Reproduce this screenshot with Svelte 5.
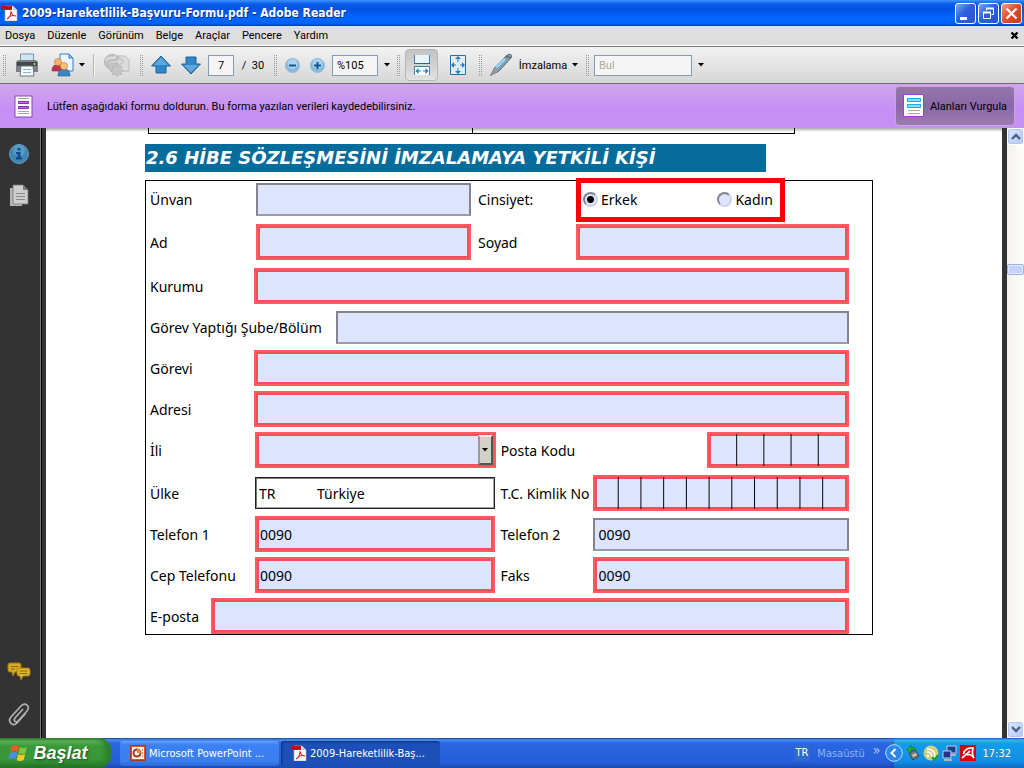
<script lang="ts">
  const menus = ["Dosya", "Düzenle", "Görünüm", "Belge", "Araçlar", "Pencere", "Yardım"];

  let pageNumber = $state("7");
  let zoomLevel = $state("%105");
  let findText = $state("");
  let gender = $state("erkek");

  let form = $state({
    unvan: "",
    ad: "",
    soyad: "",
    kurum: "",
    sube: "",
    gorev: "",
    adres: "",
    il: "",
    postaKodu: "",
    ulkeKodu: "TR",
    ulke: "Türkiye",
    kimlikNo: "",
    telefon1: "0090",
    telefon2: "0090",
    cep: "0090",
    faks: "0090",
    eposta: "",
  });
</script>

<svelte:head>
  <title>2009-Hareketlilik-Başvuru-Formu.pdf - Adobe Reader</title>
</svelte:head>

{#snippet pdfIcon()}
  <svg width="16" height="16" viewBox="0 0 16 16" aria-hidden="true">
    <path d="M3 1h8l4 4v11H3z" fill="#fff" stroke="#aab" stroke-width=".7" />
    <path d="M11 1v4h4z" fill="#ccd" />
    <path d="M0 1h10v4H0z" fill="#c80d12" />
    <path d="M5 14c2-1 4-4 4-8 .5 4 2 5 5 5-3-1-6 0-8 2" fill="none" stroke="#d8251c" stroke-width="1.1" />
  </svg>
{/snippet}

{#snippet caret()}
  <svg class="caret" width="6" height="4" viewBox="0 0 6 4" aria-hidden="true"><path d="M0 0h6L3 3.5z" fill="#000" /></svg>
{/snippet}

{#snippet arrow()}
  <svg width="22" height="22" viewBox="0 0 22 22" aria-hidden="true">
    <path d="M11 2 20.500 12H16v7H6v-7H1.500z" fill="#2e87c8" stroke="#1f6298" />
    <path d="M11 3.500 18 11H4z" fill="#5eaade" />
  </svg>
{/snippet}

<div class="window">
  <header class="titlebar">
    {@render pdfIcon()}
    <h1>2009-Hareketlilik-Başvuru-Formu.pdf - Adobe Reader</h1>
    <div class="window-buttons">
      <button aria-label="Simge durumuna küçült">
        <svg width="19" height="19" viewBox="0 0 19 19"><path d="M4 13h7v3H4z" fill="#fff" /></svg>
      </button>
      <button aria-label="Önceki boyut">
        <svg width="19" height="19" viewBox="0 0 19 19" fill="none" stroke="#fff">
          <path d="M7.500 6.500v-2h7v6h-2" /><path d="M7 4.500h8" stroke-width="2" />
          <path d="M4.500 8.500h7v6h-7z" /><path d="M4 8.500h8" stroke-width="2" />
        </svg>
      </button>
      <button class="close" aria-label="Kapat">
        <svg width="19" height="19" viewBox="0 0 19 19"><path d="m4.500 4.500 10 10m0-10-10 10" stroke="#fff" stroke-width="2.300" /></svg>
      </button>
    </div>
  </header>

  <nav class="menubar">
    {#each menus as menu}
      <button>{menu}</button>
    {/each}
    <button class="close-doc" aria-label="Belgeyi kapat">
      <svg width="9" height="9" viewBox="0 0 9 9"><path d="m1.500 1.500 6 6m0-6-6 6" stroke="#000" stroke-width="2.400" /></svg>
    </button>
  </nav>

  <div class="toolbar">
    <div class="group">
      <span class="grip"></span>
      <button class="w32" aria-label="Yazdır">
        <svg width="24" height="24" viewBox="0 0 24 24">
          <path d="M5.500 1h13v9h-13z" fill="#cfe6f4" stroke="#7894a8" />
          <path d="M3 7h18l2 2v10H1V9z" fill="#7b8184" />
          <path d="M2 9h20v4H2z" fill="#42474a" />
          <circle cx="19.500" cy="11" r="1" fill="#c6e48b" />
          <path d="M6 13h12l1 10H5z" fill="#f5f9fc" stroke="#70777b" />
          <path d="M8 16.500h8M8 19.500h8" stroke="#8fb3cd" />
        </svg>
      </button>
      <button class="w42 with-caret" aria-label="Ortak çalış">
        <svg width="24" height="24" viewBox="0 0 24 24">
          <path d="M9 1h9l4 4v13H9z" fill="#eaf6ff" stroke="#3581c4" />
          <path d="M18 1v4h4z" fill="#9bcbef" stroke="#3581c4" />
          <path d="M1 18c0-6 3-6 6-6s5 1 6 6z" fill="#c03452" stroke="#8c1f3a" stroke-width=".6" />
          <circle cx="7" cy="9" r="3.600" fill="#f5b469" stroke="#c07a30" stroke-width=".6" />
          <path d="M7 23c0-6 3-7 6-7s6 1 6 7z" fill="#3a87c4" stroke="#20598c" stroke-width=".6" />
          <circle cx="13" cy="13" r="3.600" fill="#f9c07b" stroke="#c07a30" stroke-width=".6" />
        </svg>
        {@render caret()}
      </button>
      <span class="separator"></span>
      <button class="w35" disabled aria-label="Web">
        <svg width="28" height="24" viewBox="0 0 28 24">
          <path d="M14 3h8l4 4v11H14z" fill="#dcdcdc" stroke="#bbb" />
          <circle cx="9" cy="9" r="7.500" fill="#c4c4c4" stroke="#b2b2b2" />
          <path d="M3 7c4-4 6-1 10-3" stroke="#dedede" stroke-width="2" fill="none" />
          <path d="M4 13c1-5 7-6 11-6V4l6 4.500-6 4.500v-3c-4 0-8 0-11 3z" fill="#d9d9d9" stroke="#b6b6b6" />
          <path d="m14 11 2 3 3-1-1 3 3 2-3 1 1 3-3-1-2 3-2-3-3 1 1-3-3-1 3-2-1-3 3 1z" fill="#c6c6c6" stroke="#b6b6b6" stroke-width=".8" />
        </svg>
      </button>
    </div>

    <div class="group">
      <span class="grip"></span>
      <button class="w26" aria-label="Önceki sayfa">{@render arrow()}</button>
      <button class="w26 down" aria-label="Sonraki sayfa">{@render arrow()}</button>
      <input class="page-number" aria-label="Sayfa" bind:value={pageNumber} />
      <span class="page-count">/&nbsp; 30</span>
    </div>

    <div class="group">
      <span class="grip"></span>
      {#each ["Uzaklaştır", "Yakınlaştır"] as label, i}
        <button class="w21" aria-label={label}>
          <svg width="17" height="17" viewBox="0 0 17 17">
            <circle cx="8.500" cy="8.500" r="7" fill="#85bbe3" stroke="#9ab7cf" />
            <circle cx="8.500" cy="7" r="5" fill="#a9d3f0" />
            <path d={i ? "M5 8.500h7M8.500 5v7" : "M5 8.500h7"} stroke="#14558d" stroke-width="2" />
          </svg>
        </button>
      {/each}
      <input class="zoom" aria-label="Yakınlaştırma" bind:value={zoomLevel} />
      <button class="w9" aria-label="Yakınlaştırma listesi">{@render caret()}</button>
    </div>

    <div class="group">
      <span class="grip"></span>
      <button class="w33 pressed" aria-label="Genişliğe sığdır" aria-pressed="true">
        <svg width="18" height="22" viewBox="0 0 18 22">
          <path d="M1.500 1v8.500h15V1" fill="#e8f4fc" stroke="#417fab" />
          <path d="M1 9.500h16" stroke="#2b648d" />
          <path d="M1.500 21v-8.500h15V21" fill="#fff" stroke="#417fab" />
          <path d="M4 17h10" stroke="#2b79b8" stroke-dasharray="4 2" />
          <path d="m2.500 17 3-3v6zM15.500 17l-3-3v6z" fill="#2b79b8" />
        </svg>
      </button>
      <button class="w31" aria-label="Sayfaya sığdır">
        <svg width="18" height="22" viewBox="0 0 18 22">
          <path d="M1.500 1.500h15v19h-15z" fill="#dceefb" stroke="#2b70a5" />
          <path d="M9 3v5M9 14v5M3 11h4M11 11h4" stroke="#2b79b8" />
          <path d="m9 2-3 3h6zM9 20l-3-3h6zM2 11l3-3v6zM16 11l-3-3v6z" fill="#2b79b8" />
        </svg>
      </button>
    </div>

    <div class="group">
      <span class="grip"></span>
      <button class="sign">
        <svg width="25" height="24" viewBox="0 0 25 24" aria-hidden="true">
          <path d="M1.500 22.500 6 14 17 3c3-3 7-2 5 2L10 18z" fill="#7f9cb0" stroke="#646b70" />
          <path d="M7 14.500 16 6" stroke="#9fd0f2" stroke-width="3" />
          <path d="m1.500 22.500 4.500-8 4 3z" fill="#999c9e" />
          <path d="m17 3 5 2" stroke="#555" />
        </svg>
        <span>İmzalama</span>
        {@render caret()}
      </button>
    </div>

    <div class="group">
      <span class="grip"></span>
      <input class="find" aria-label="Bul" placeholder="Bul" bind:value={findText} />
      <button class="w9" aria-label="Bul seçenekleri">{@render caret()}</button>
    </div>
  </div>

  <div class="message-bar">
    <svg width="19" height="23" viewBox="0 0 19 23" aria-hidden="true">
      <path d="M1 1h17v21H1z" fill="#fff" stroke="#8a45b0" />
      <path d="M4 3.500h11M4 16.500h11M4 18.500h11" stroke="#aaa" />
      <path d="M4.500 6.500h10v2h-10zM4.500 11.500h10v2h-10z" fill="#c56ee8" stroke="#8b28b2" />
    </svg>
    <p>Lütfen aşağıdaki formu doldurun. Bu forma yazılan verileri kaydedebilirsiniz.</p>
    <button class="highlight" aria-pressed="true">
      <svg width="22" height="24" viewBox="0 0 22 24" aria-hidden="true">
        <path d="M.5.500h20v22H.5z" fill="#fff" stroke="#a03cc8" />
        <path d="M4.500 4.500h13v3h-13zM4.500 10.500h13v3h-13z" fill="#7fe4ff" stroke="#18a8e8" />
        <path d="M5 16.500h12M5 19.500h12" stroke="#aaa" />
      </svg>
      Alanları Vurgula
    </button>
  </div>

  <main>
    <aside class="sidebar">
      <button aria-label="Bilgi">
        <svg width="22" height="22" viewBox="0 0 22 22">
          <circle cx="11" cy="11" r="9.500" fill="#3f86b2" stroke="#5f9cc0" />
          <circle cx="11" cy="7.500" r="6" fill="#73aecf" opacity=".5" />
          <path d="M9.500 5h3v2.500h-3zM8 9h4.500v5.500H14v2H8v-2h1.500V11H8z" fill="#0c4b93" />
        </svg>
      </button>
      <button aria-label="Sayfalar">
        <svg width="20" height="24" viewBox="0 0 20 24">
          <path d="M1 4h12v18H1z" fill="#b5b5b5" />
          <path d="M4 1h10l5 5v14H4z" fill="#cdcdcd" stroke="#777" stroke-width=".8" />
          <path d="M14 1v5h5z" fill="#777" />
          <path d="M7 9.500h9M7 12.500h9M7 15.500h9" stroke="#8a8a8a" />
        </svg>
      </button>
      <button class="comments" aria-label="Yorumlar">
        <svg width="24" height="20" viewBox="0 0 24 20">
          <path d="M3 1h9q2 0 2 2v5q0 2-2 2H8l-2 4-1-4H3q-2 0-2-2V3q0-2 2-2z" fill="#d6ac20" stroke="#a87510" />
          <path d="M12 6h9q2 0 2 2v4q0 2-2 2h-5l-2 4-1-4h-1q-2 0-2-2V8q0-2 2-2z" fill="#dfb92a" stroke="#a87510" />
          <path d="M4 4.500h7M4 7h4M12.500 9h8M12.500 11.500h8" stroke="#886514" />
        </svg>
      </button>
      <button aria-label="Ekler">
        <svg width="22" height="24" viewBox="0 0 22 24" fill="none" stroke="#b1b1b1" stroke-width="1.700">
          <path d="m15 7-8 9c-2 3 1 5 3 3l9-10c4-5-2-9-6-5L3 15c-4 5 2 10 6 6l9-10" />
        </svg>
      </button>
    </aside>

    <div class="document">
      <div class="previous-table"><span></span><span></span></div>
      <h2>2.6 HİBE SÖZLEŞMESİNİ İMZALAMAYA YETKİLİ KİŞİ</h2>

      <form class="sheet">
        <div class="row person title">
          <label for="unvan">Ünvan</label>
          <input id="unvan" class="field" bind:value={form.unvan} />
          <span class="second">Cinsiyet:</span>
          <div class="gender" role="radiogroup" aria-label="Cinsiyet">
            <label><input type="radio" name="cinsiyet" value="erkek" bind:group={gender} />Erkek</label>
            <label><input type="radio" name="cinsiyet" value="kadin" bind:group={gender} />Kadın</label>
          </div>
        </div>
        <div class="row person">
          <label for="ad">Ad</label>
          <input id="ad" class="field required" bind:value={form.ad} />
          <label class="second" for="soyad">Soyad</label>
          <input id="soyad" class="field required" bind:value={form.soyad} />
        </div>
        <div class="row full kurum">
          <label for="kurum">Kurumu</label>
          <input id="kurum" class="field required" bind:value={form.kurum} />
        </div>
        <div class="row sube">
          <label for="sube">Görev Yaptığı Şube/Bölüm</label>
          <input id="sube" class="field" bind:value={form.sube} />
        </div>
        <div class="row full">
          <label for="gorev">Görevi</label>
          <input id="gorev" class="field required" bind:value={form.gorev} />
        </div>
        <div class="row full">
          <label for="adres">Adresi</label>
          <input id="adres" class="field required" bind:value={form.adres} />
        </div>
        <div class="row city">
          <label for="il">İli</label>
          <div class="select-wrap">
            <select id="il" class="field required" bind:value={form.il}>
              <option value=""></option>
            </select>
            <span class="drop">{@render caret()}</span>
          </div>
          <label class="third" for="posta-kodu">Posta Kodu</label>
          <div class="comb" style="--cells: 5">
            <input id="posta-kodu" class="field required" maxlength="5" bind:value={form.postaKodu} />
          </div>
        </div>
        <div class="row pair country">
          <label for="ulke">Ülke</label>
          <div class="readonly">
            <input class="code" aria-label="Ülke kodu" readonly value={form.ulkeKodu} />
            <input id="ulke" readonly value={form.ulke} />
          </div>
          <label class="third" for="kimlik">T.C. Kimlik No</label>
          <div class="comb" style="--cells: 11">
            <input id="kimlik" class="field required" maxlength="11" bind:value={form.kimlikNo} />
          </div>
        </div>
        <div class="row pair">
          <label for="telefon1">Telefon 1</label>
          <input id="telefon1" class="field required" bind:value={form.telefon1} />
          <label class="third" for="telefon2">Telefon 2</label>
          <input id="telefon2" class="field" bind:value={form.telefon2} />
        </div>
        <div class="row pair">
          <label for="cep">Cep Telefonu</label>
          <input id="cep" class="field required" bind:value={form.cep} />
          <label class="third" for="faks">Faks</label>
          <input id="faks" class="field required" bind:value={form.faks} />
        </div>
        <div class="row eposta">
          <label for="eposta">E-posta</label>
          <input id="eposta" class="field required" bind:value={form.eposta} />
        </div>
      </form>
    </div>

    <div class="scrollbar">
      <button aria-label="Yukarı kaydır">
        <svg width="10" height="7" viewBox="0 0 10 7"><path d="m1 6 4-4 4 4" fill="none" stroke="#4d6185" stroke-width="2.400" /></svg>
      </button>
      <div class="track"><span class="thumb"></span></div>
      <button aria-label="Aşağı kaydır">
        <svg width="10" height="7" viewBox="0 0 10 7"><path d="m1 1 4 4 4-4" fill="none" stroke="#4d6185" stroke-width="2.400" /></svg>
      </button>
    </div>
  </main>

  <footer class="taskbar">
    <button class="start">
      <svg width="20" height="20" viewBox="0 0 20 20" aria-hidden="true">
        <path d="M3 3q4-2 7 0L8.500 9q-3-2-7 0z" fill="#ee5a25" />
        <path d="M11 4q3 2 7 0l-1.500 6q-4 2-7 0z" fill="#86c440" />
        <path d="M1.200 10q4-2 7 0l-1.500 6q-3-2-7 0z" fill="#4c8bf0" />
        <path d="M9.200 11q3 2 7 0l-1.500 6q-4 2-7 0z" fill="#fbc52c" />
      </svg>
      Başlat
    </button>
    <button class="task">
      <svg width="16" height="16" viewBox="0 0 16 16" aria-hidden="true">
        <path d="M.5.500h15v15H.5z" fill="#d9532a" stroke="#a9391a" />
        <path d="M2 2h12v12H2z" fill="#fff4e8" />
        <circle cx="7" cy="8" r="3.500" fill="none" stroke="#a6371a" stroke-width="2" />
        <path d="M7 8V4a4 4 0 0 1 4 4z" fill="#e8854d" />
        <path d="M12 5h1M12 8h1M12 11h1" stroke="#a6371a" />
      </svg>
      <span>Microsoft PowerPoint ...</span>
    </button>
    <button class="task active">
      {@render pdfIcon()}
      <span>2009-Hareketlilik-Baş...</span>
    </button>
    <div class="toolbars">
      <span class="language">TR</span>
      <span class="desktop">Masaüstü</span>
      <span class="chevrons">»</span>
    </div>
    <div class="tray">
      <button class="expand" aria-label="Gizli simgeleri göster">
        <svg width="18" height="18" viewBox="0 0 18 18">
          <circle cx="9" cy="9" r="8.300" fill="#2b87e8" stroke="#b9dcff" />
          <path d="M10.500 5 6.500 9l4 4" fill="none" stroke="#fff" stroke-width="2" />
        </svg>
      </button>
      <svg width="14" height="16" viewBox="0 0 14 16" aria-hidden="true">
        <path d="m3 8 6-3 4 6-6 4z" fill="#777c80" stroke="#333" stroke-width=".8" />
        <path d="m6 10 4-2 1 2-4 2z" fill="#ccc" />
        <path d="M1 5 5 0v2q5 0 5 4-2-2-5-2v4z" fill="#28b52d" stroke="#116d18" stroke-width=".6" />
      </svg>
      <svg width="16" height="16" viewBox="0 0 16 16" aria-hidden="true">
        <circle cx="8" cy="8" r="7.500" fill="#ccd07a" />
        <path d="M4 4q8 0 8 8M4 7q5 0 5 5" stroke="#fff" stroke-width="1.500" fill="none" />
        <circle cx="5" cy="11" r="1.300" fill="#fff" />
        <path d="m9 12 2 3 4-5" fill="none" stroke="#119b2c" stroke-width="2" />
      </svg>
      <svg width="15" height="16" viewBox="0 0 15 16" aria-hidden="true">
        <path d="M5 1h9v7H5z" fill="#1a3f91" stroke="#c7cce0" />
        <path d="M1 6h8v7H1z" fill="#1d358b" stroke="#c7cce0" />
        <path d="M8 10h6M2 15h8" stroke="#aab2c5" stroke-width="2" />
      </svg>
      <svg width="16" height="16" viewBox="0 0 16 16" aria-hidden="true">
        <path d="M0 0h16v16H0z" fill="#d8000c" />
        <path d="M3.500 9C4 5 8 2.500 13 3c-1 4-1 7 1 10-2-3-5-4-7-3" fill="none" stroke="#fff" stroke-width="1.700" />
        <path d="m10 6-8 7" stroke="#fff" stroke-width="1.700" />
      </svg>
      <time>17:32</time>
    </div>
  </footer>
</div>

<style>
  :global(body) {
    margin: 0;
    background: #fff;
  }

  .window {
    display: flex;
    flex-direction: column;
    min-height: 100vh;
    font-family: "DejaVu Sans Condensed", "DejaVu Sans", sans-serif;
    font-size: 11px;
    color: #000;
  }

  .window * {
    box-sizing: border-box;
  }

  button {
    display: flex;
    align-items: center;
    justify-content: center;
    padding: 0;
    border: 0;
    background: none;
    font: inherit;
    color: inherit;
    white-space: nowrap;
  }

  svg {
    flex: none;
  }

  input,
  select {
    min-width: 0;
    margin: 0;
    border-radius: 0;
    font: inherit;
    color: inherit;
  }

  .titlebar {
    display: flex;
    align-items: center;
    gap: 4px;
    height: 26px;
    padding: 0 2px;
    background: linear-gradient(#3b95ff 0, #0a5be8 4px, #0053e1 9px, #0066ff 18px, #0064fb 23px, #003dd0 26px);
  }

  .titlebar h1 {
    flex: 1;
    margin: 0;
    font-size: 12px;
    color: #fff;
    text-shadow: 1px 1px #0b2f8a;
    white-space: nowrap;
  }

  .window-buttons {
    display: flex;
    gap: 2px;
  }

  .window-buttons button {
    width: 21px;
    height: 21px;
    border: 1px solid #fff;
    border-radius: 3px;
    background: linear-gradient(135deg, #7ea5f4, #2f5fdd 45%, #2a55cf);
  }

  .window-buttons .close {
    background: linear-gradient(135deg, #f0a088, #e0512c 45%, #c63a14);
  }

  .menubar,
  .toolbar,
  .message-bar {
    font-family: Roboto, "Noto Sans", sans-serif;
  }

  .menubar {
    display: flex;
    align-items: center;
    gap: 12px;
    height: 20px;
    padding: 0 5px;
    background: #dedede;
    border-bottom: 1px solid #fff;
  }

  .close-doc {
    margin-left: auto;
  }

  .toolbar {
    display: flex;
    align-items: center;
    gap: 6px;
    height: 38px;
    padding-left: 3px;
    border-top: 1px solid #777;
    border-bottom: 1px solid #6d6d6d;
    background: linear-gradient(#f2f2f2, #d6d6d6);
  }

  .group {
    display: flex;
    align-items: center;
    gap: 4px;
  }

  .grip {
    width: 3px;
    height: 21px;
    margin-right: 1px;
    border: 0 dotted #999;
    border-width: 0 1px;
  }

  .separator {
    width: 2px;
    height: 22px;
    border-left: 1px solid #b8b8a8;
    border-right: 1px solid #f4f4ec;
  }

  .w9 {
    width: 9px;
  }

  .w21 {
    width: 21px;
  }

  .w26 {
    width: 26px;
  }

  .w31 {
    width: 31px;
  }

  .w32 {
    width: 32px;
  }

  .w33 {
    width: 33px;
  }

  .w35 {
    width: 35px;
  }

  .w42 {
    width: 42px;
  }

  .with-caret {
    gap: 4px;
  }

  .down svg {
    transform: rotate(180deg);
  }

  .pressed {
    height: 32px;
    border: 1px solid #b5b5b5;
    border-radius: 4px;
    background: linear-gradient(#c3c3c3, #e2e2e2);
  }

  .toolbar input {
    height: 21px;
    padding: 0 4px;
    border: 1px solid #7f9db9;
    background: #f5f5f5;
  }

  .toolbar .page-number {
    width: 26px;
    text-align: center;
  }

  .page-count {
    width: 30px;
    text-align: center;
  }

  .toolbar .zoom {
    width: 46px;
  }

  .toolbar .find {
    width: 98px;
  }

  .find::placeholder {
    color: #aca899;
    opacity: 1;
  }

  .sign {
    width: 93px;
    gap: 5px;
  }

  .message-bar {
    display: flex;
    align-items: center;
    gap: 14px;
    height: 44px;
    padding: 0 9px 0 14px;
    background: linear-gradient(#d0a6ec, #c58ff6 60%);
  }

  .message-bar p {
    flex: 1;
    margin: 0;
  }

  .highlight {
    gap: 5px;
    width: 120px;
    height: 40px;
    border: 1px solid #c6a6da;
    border-radius: 4px;
    background: linear-gradient(#9377a9, #8c66a9 50%, #9a7cae);
  }

  main {
    display: flex;
    flex: 1;
  }

  .sidebar {
    display: flex;
    flex-direction: column;
    gap: 18px;
    width: 46px;
    padding: 14px 8px 12px;
    border-right: 4px solid #333;
    background: linear-gradient(90deg, #333 40px, #777 40px, #777 41px, #000 41px);
  }

  .sidebar button {
    width: 22px;
    height: 24px;
  }

  .sidebar .comments {
    margin-top: auto;
  }

  .document {
    flex: 1;
    padding: 0 129px 24px 99px;
    border-right: 5px solid #333;
    background: linear-gradient(#aaa, #fff 4px);
  }

  .previous-table {
    display: grid;
    grid-template-columns: 1fr 1fr;
    height: 6px;
    margin: 0 78px 10px 3px;
    border: 1px solid #000;
    border-top: 0;
  }

  .previous-table span + span {
    border-left: 1px solid #000;
  }

  h2 {
    height: 28px;
    margin: 0 107px 8px 0;
    padding-left: 1px;
    background: #056c9c;
    font-family: "DejaVu Sans", sans-serif;
    font-size: 18px;
    font-style: italic;
    line-height: 28px;
    color: #fff;
    white-space: nowrap;
  }

  .sheet {
    display: flex;
    flex-direction: column;
    gap: 5px;
    padding: 2px 23px 0 4px;
    border: 1px solid #000;
    font-family: "Noto Sans", "Open Sans", sans-serif;
    font-size: 14px;
  }

  .row {
    display: grid;
    grid-template-rows: 36px;
    align-items: center;
    white-space: nowrap;
  }

  .row.person {
    grid-template-columns: 106px 215fr 105px 273fr;
  }

  .row.full {
    grid-template-columns: 104px 1fr;
  }

  .row.sube {
    grid-template-columns: 186px 1fr;
  }

  .row.city {
    grid-template-columns: 105px 240fr 211px 142fr;
  }

  .row.pair {
    grid-template-columns: 105px 240fr 98px 255fr;
  }

  .row.eposta {
    grid-template-columns: 61px 1fr;
  }

  .row.title {
    grid-template-rows: 33px;
    margin-bottom: 3px;
  }

  .row.kurum {
    margin-top: 3px;
  }

  .row.country {
    margin-top: 2px;
  }

  .second {
    padding-left: 7px;
  }

  .third {
    padding-left: 5px;
  }

  .field {
    width: 100%;
    height: 33px;
    padding: 0 3px;
    border: 2px solid;
    border-color: #82848f #82848f #9a9ba8 #82848f;
    background: #dde4ff;
    appearance: none;
  }

  .field.required {
    height: 36px;
    border: 2px solid #ff5a60;
    box-shadow: inset 0 0 0 2px #f25058;
  }

  .gender {
    display: flex;
    align-items: center;
    align-self: center;
    justify-self: start;
    gap: 80px;
    width: 209px;
    height: 44px;
    padding-left: 2px;
    border: 5px solid #f00;
  }

  .gender label {
    display: flex;
    align-items: center;
    gap: 3px;
  }

  .gender input {
    width: 15px;
    height: 15px;
    border: 2px solid;
    border-color: #808490 #ccd2e8 #ccd2e8 #808490;
    border-radius: 50%;
    background: #dde4ff;
    appearance: none;
  }

  .gender input:checked {
    background: radial-gradient(circle, #000 3px, #dde4ff 4px);
  }

  .select-wrap,
  .comb {
    position: relative;
    display: flex;
    min-width: 0;
  }

  .drop {
    position: absolute;
    top: 3px;
    right: 3px;
    bottom: 3px;
    display: flex;
    align-items: center;
    justify-content: center;
    width: 15px;
    border: 2px solid;
    border-color: #eee #555 #555 #999;
    background: #d4d0c8;
    pointer-events: none;
  }

  /* digit separators, one line at the start of every cell but the first */
  .comb::after {
    content: "";
    position: absolute;
    inset: 2px 3px;
    background: linear-gradient(90deg, #000 1px, transparent 1px) -1px 0 / calc(100% / var(--cells)) 100%;
    clip-path: inset(0 2px);
    pointer-events: none;
  }

  .readonly {
    display: flex;
    min-width: 0;
    height: 32px;
    border: 1px solid #222;
    box-shadow: inset -1px -1px #a5a59c, inset 1px 1px #777;
  }

  .readonly input {
    flex: 1;
    padding: 0 3px;
    border: 0;
    background: none;
  }

  .readonly .code {
    flex: none;
    width: 58px;
  }

  .scrollbar {
    display: flex;
    flex-direction: column;
    width: 17px;
    background: linear-gradient(90deg, #f3f1ec, #fefefb);
  }

  .scrollbar button {
    height: 17px;
    border: 1px solid #fff;
    border-radius: 3px;
    background: linear-gradient(135deg, #dce6ff, #b4c8f6);
    box-shadow: inset 0 0 0 1px #b2c5ef;
  }

  .track {
    display: flex;
    flex: 1;
    flex-direction: column;
  }

  .track::before {
    content: "";
    flex: 119;
  }

  .track::after {
    content: "";
    flex: 446;
  }

  .thumb {
    height: 11px;
    border: 1px solid #9ab2e6;
    border-radius: 2px;
    background: #c3d3fd;
    box-shadow: inset 0 0 0 1px #e4ecff;
  }

  .taskbar {
    display: flex;
    align-items: center;
    gap: 2px;
    height: 30px;
    background: linear-gradient(#1941a5 0, #4a90f0 2px, #2b66e0 5px, #245edb 24px, #1c48b0 30px);
    color: #fff;
  }

  .start {
    gap: 4px;
    width: 111px;
    height: 30px;
    margin-right: 7px;
    padding-right: 14px;
    border-radius: 0 12px 12px 0;
    background: linear-gradient(#2f7d2c 0, #63b75d 3px, #3a9a38 8px, #38963a 22px, #246f24 30px);
    box-shadow: inset -5px 0 6px #2b7a2b;
    font-family: "Liberation Sans", sans-serif;
    font-size: 18px;
    font-style: italic;
    font-weight: 700;
    text-shadow: 1px 1px 2px #1b4a1b;
  }

  .task {
    justify-content: flex-start;
    gap: 3px;
    width: 159px;
    height: 25px;
    padding-left: 10px;
    border-radius: 3px;
    background: linear-gradient(#63a0fc 0, #3c81f3 4px, #3a7ef0 20px, #2d68d6 25px);
  }

  .task.active {
    background: #1c50b8;
    box-shadow: inset 1px 1px 2px #0d327d;
  }

  .toolbars {
    display: flex;
    align-items: center;
    gap: 8px;
    margin: 0 12px 0 auto;
  }

  .language {
    padding: 0 1px;
    background: #2f6bc9;
    line-height: 16px;
  }

  .desktop {
    color: #8fb5f2;
  }

  .chevrons {
    align-self: flex-start;
    font-size: 14px;
    line-height: 10px;
    color: #b3ccf6;
  }

  .tray {
    display: flex;
    align-items: center;
    gap: 3px;
    height: 30px;
    padding-right: 13px;
    background: linear-gradient(#0c59b9 0, #35b5f8 2px, #149bea 6px, #128fe6 23px, #0f6cc0 30px);
  }

  .tray time {
    margin-left: 3px;
  }

  .expand {
    margin-left: -9px;
  }
</style>
